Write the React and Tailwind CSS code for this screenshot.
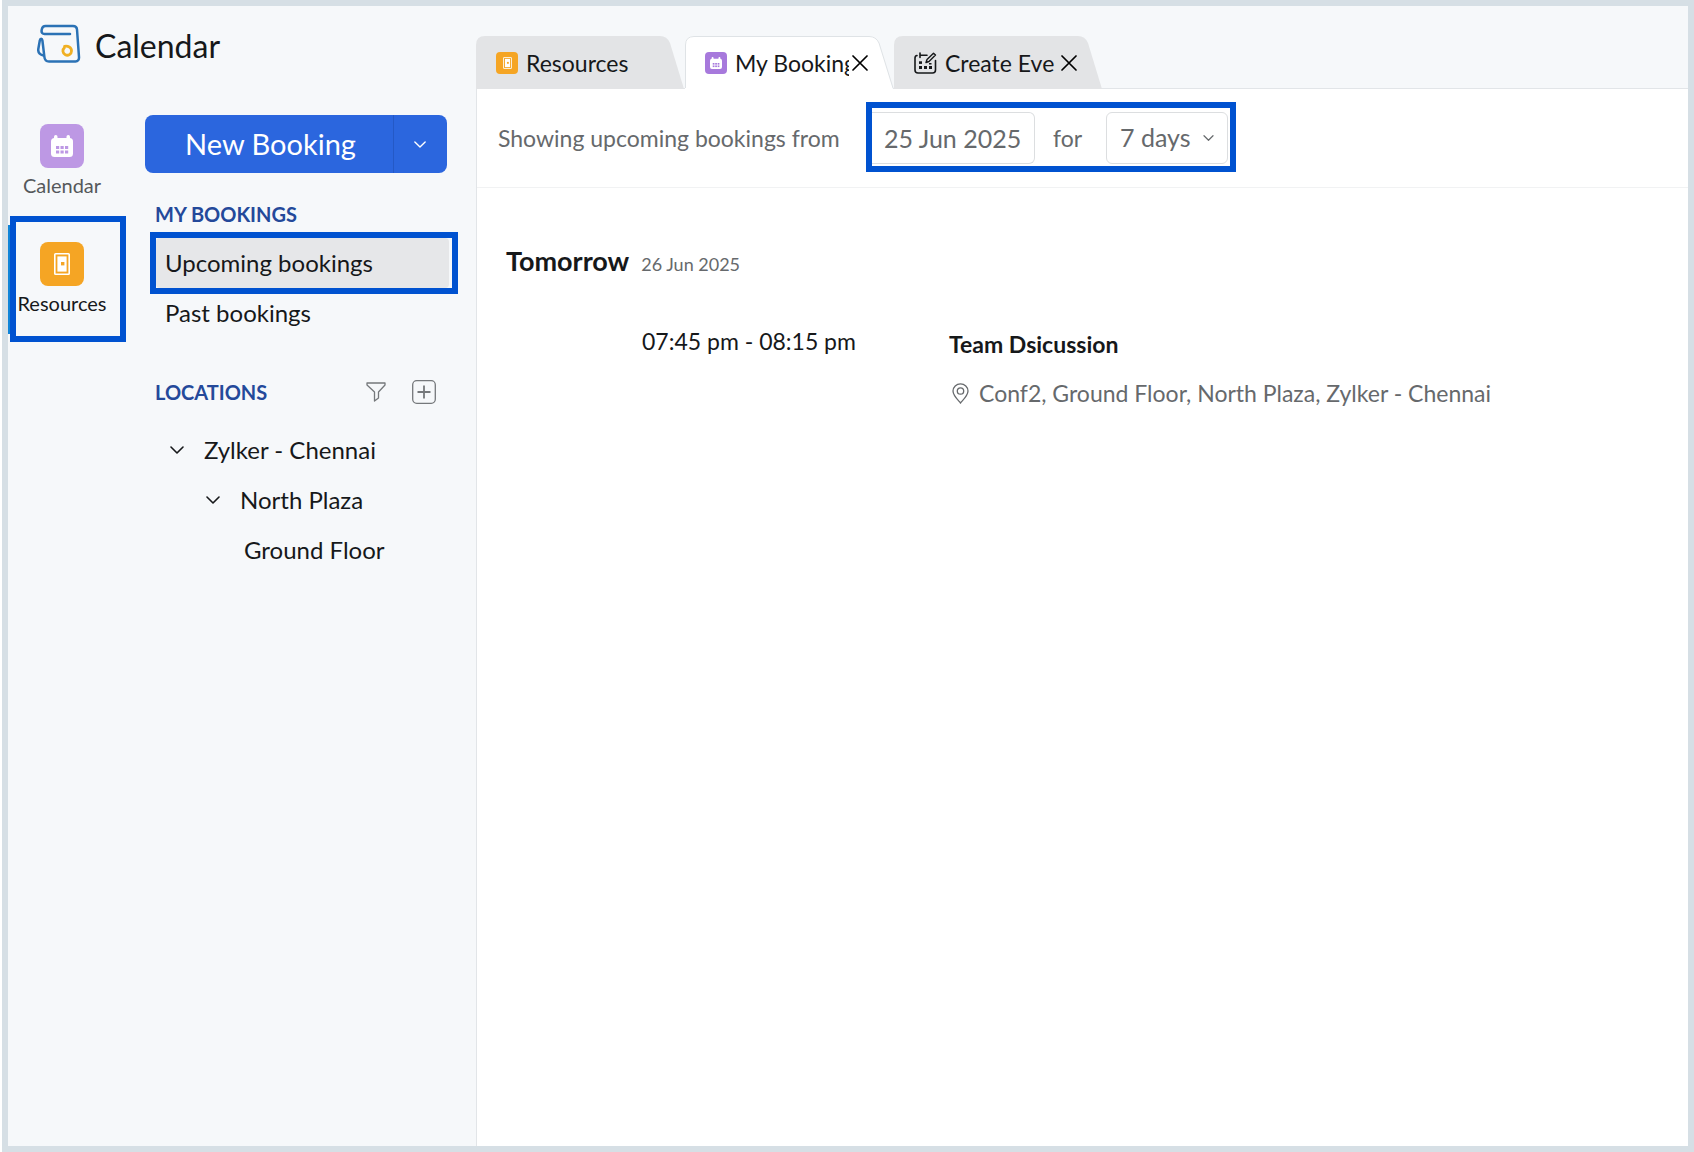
import { useState } from "react";

const FONT = "font-['Lato','Liberation_Sans',sans-serif]";

function LogoIcon() {
  return (
    <svg width="44" height="40" viewBox="0 0 44 40" fill="none" strokeLinecap="round" strokeLinejoin="round">
      <path
        d="M33 10H7.500C5.500 10 4.300 8.500 4.600 6.500L4.900 5C5.300 3 6.500 2 8.500 2H36C38.500 2 39.800 3.300 40 5.500L42 33C42.200 35.800 40.800 37.500 38.500 37.500H12C9 37.500 7.700 36 7.400 33L5.400 16.500C5.100 14.300 3.200 14.300 2.800 16.500L1.300 25C.9 28 2 30.500 6.500 31.500"
        stroke="#2b72b5"
        strokeWidth="2.500"
      />
      <path d="M27.500 22.300C31 21.800 34.500 23 34.500 27A4.300 4.300 0 1 1 27.500 23.600" stroke="#f0b023" strokeWidth="2.800" />
    </svg>
  );
}

function CalendarGlyph({ className }) {
  return (
    <svg viewBox="0 0 22 22" className={className}>
      <rect x="0" y="3" width="22" height="19" rx="3.500" fill="#fff" />
      <rect x="3" y="0" width="3.500" height="6" rx="1.700" fill="#fff" />
      <rect x="15.500" y="0" width="3.500" height="6" rx="1.700" fill="#fff" />
      <g fill="currentColor">
        <rect x="5" y="11" width="3.200" height="3" />
        <rect x="9.500" y="11" width="3.200" height="3" />
        <rect x="14" y="11" width="3.200" height="3" />
        <rect x="5" y="15.500" width="3.200" height="3" />
        <rect x="9.500" y="15.500" width="3.200" height="3" />
        <rect x="14" y="15.500" width="3.200" height="3" />
      </g>
    </svg>
  );
}

function DoorGlyph({ className }) {
  return (
    <svg viewBox="0 0 16 22" className={className}>
      <rect x="0.800" y="0.800" width="14.400" height="20.400" rx="0.800" fill="none" stroke="#fff" strokeWidth="1.600" />
      <rect x="3.400" y="3.400" width="9.200" height="15.200" fill="#fff" />
      <rect x="7" y="9" width="3.400" height="3.400" fill="currentColor" />
    </svg>
  );
}

function EditCalendarIcon() {
  return (
    <svg width="23" height="22" viewBox="0 0 23 22" fill="none" stroke="#16181a" strokeWidth="1.600" strokeLinecap="round">
      <path d="M3 3.500C1.700 3.700 1 4.500 1 6V18C1 20 2 21 4 21H18.500C20.500 21 21.500 20 21.500 18V8.500" />
      <path d="M6 1V5.500M6 3.300H13" />
      <path d="M12 10.500L13 7.500L19.500 1.200L21.500 3L15 9.500L12 10.500Z" strokeWidth="1.400" strokeLinejoin="round" />
      <g fill="#16181a" stroke="none">
        <rect x="5" y="9.300" width="3" height="2.600" />
        <rect x="5" y="14" width="3" height="3" />
        <rect x="10" y="14" width="3" height="3" />
        <rect x="15" y="14" width="3" height="3" />
        <rect x="15" y="11" width="2.500" height="1.500" />
      </g>
    </svg>
  );
}

function Chevron({ className }) {
  return (
    <svg viewBox="0 0 14 8" className={className} fill="none" stroke="currentColor" strokeWidth="1.600" strokeLinecap="round" strokeLinejoin="round">
      <path d="M1 1L7 7L13 1" />
    </svg>
  );
}

function TabShape({ active }) {
  return (
    <svg
      width="209"
      height="53"
      viewBox="0 0 209 53"
      className="absolute top-0 left-0"
      fill={active ? "#ffffff" : "#e3e4e6"}
    >
      <path d="M0 53V9Q0 0 9 0H184Q191 0 194 7L208 53Z" />
      {active && (
        <path d="M0.500 52V9Q0.500 0.500 9 0.500H184Q191 0.500 194 7L208 52" fill="none" stroke="#dfe3e6" />
      )}
    </svg>
  );
}

const tabs = [
  { id: "resources", label: "Resources", closable: false },
  { id: "bookings", label: "My Bookings", closable: true },
  { id: "create", label: "Create Eve", closable: true },
];

function TabIcon({ id }) {
  if (id === "resources") {
    return (
      <span className="flex size-[22px] items-center justify-center rounded bg-[#f5a524] text-[#f5a524]">
        <DoorGlyph className="h-3 w-[9px]" />
      </span>
    );
  }
  if (id === "bookings") {
    return (
      <span className="flex size-[22px] items-center justify-center rounded bg-[#a779dc] text-[#a779dc]">
        <CalendarGlyph className="size-3" />
      </span>
    );
  }
  return <EditCalendarIcon />;
}

function App() {
  const [activeTab, setActiveTab] = useState("bookings");
  const [date, setDate] = useState("25 Jun 2025");
  const [days, setDays] = useState("7 days");

  return (
    <div className={`min-h-screen flex bg-white pl-0.5 text-[#16181a] ${FONT}`}>
      <div className="flex-1 flex flex-col border-6 border-[#d6dfe5] bg-[#f6f8fa]">
        <header className="flex h-[82px] items-end">
          <div className="flex w-[468px] shrink-0 items-start gap-3.5 self-start pt-[18px] pl-[29px]">
            <LogoIcon />
            <h1 className="pt-0.5 text-[32px] leading-10">Calendar</h1>
          </div>

          <nav className="flex h-[52px] gap-px" aria-label="Open tabs">
            {tabs.map((tab) => (
              <div key={tab.id} className="relative flex w-[208px] items-center gap-[3px]">
                <TabShape active={tab.id === activeTab} />
                <button
                  type="button"
                  onClick={() => setActiveTab(tab.id)}
                  className="relative flex h-full w-[164px] items-center gap-2 overflow-hidden pt-0.5 pl-5 text-[23px] whitespace-nowrap"
                >
                  <span className="shrink-0">
                    <TabIcon id={tab.id} />
                  </span>
                  <span>{tab.label}</span>
                </button>
                {tab.closable && (
                  <button type="button" aria-label={`Close ${tab.label}`} className="relative flex pt-0.5">
                    <svg width="16" height="16" viewBox="0 0 16 16" stroke="#000" strokeWidth="1.700" strokeLinecap="round">
                      <path d="M1 1L15 15M15 1L1 15" />
                    </svg>
                  </button>
                )}
              </div>
            ))}
          </nav>
        </header>

        <div className="flex flex-1">
          <nav className="flex w-[119px] shrink-0 flex-col pt-9 text-xl leading-6" aria-label="Apps">
            <a href="#calendar" className="flex w-[108px] flex-col items-center gap-[5px] text-[#55585b]">
              <span className="flex size-11 items-center justify-center rounded-lg bg-[#bd98e4] text-[#bd98e4]">
                <CalendarGlyph className="size-[22px]" />
              </span>
              Calendar
            </a>
            <div className="mt-[19px] flex items-center">
              <span className="h-[109px] w-0.5 bg-[#0f84d8]" />
              <a
                href="#resources"
                className="flex h-[126px] w-[116px] flex-col border-6 border-[#0052d0] pt-5"
              >
                <span className="flex w-[92px] flex-col items-center gap-[5px]">
                  <span className="flex size-11 items-center justify-center rounded-lg bg-[#f5a524] text-[#f5a524]">
                    <DoorGlyph className="h-[22px] w-4" />
                  </span>
                  Resources
                </span>
              </a>
            </div>
          </nav>

          <aside className="flex w-[349px] shrink-0 flex-col pt-[27px] pl-[18px]">
            <div className="flex h-[58px] w-[302px] overflow-hidden rounded-lg bg-[#2b66de] text-white">
              <button type="button" className="flex-1 pr-px pl-1 text-[29px]">
                New Booking
              </button>
              <button
                type="button"
                aria-label="More booking options"
                className="flex w-[54px] items-center justify-center border-l border-[#2459c6] pr-0.5"
              >
                <Chevron className="h-[7px] w-3" />
              </button>
            </div>

            <h2 className="mt-[29px] pl-2.5 text-xl leading-6 font-bold text-[#24499a]">MY BOOKINGS</h2>
            <div className="mt-1.5 ml-[5px] w-[308px] border-6 border-[#0052d0] text-2xl">
              <a href="#upcoming" className="mr-[3px] flex h-[50px] items-center rounded bg-[#e6e7e9] pl-[9px]">
                Upcoming bookings
              </a>
            </div>
            <a href="#past" className="flex h-[38px] items-center pl-5 text-2xl">
              Past bookings
            </a>

            <div className="mt-12 flex h-6 items-center pl-2.5">
              <h2 className="w-[211px] text-xl leading-6 font-bold text-[#24499a]">LOCATIONS</h2>
              <button type="button" aria-label="Filter locations">
                <svg width="20" height="20" viewBox="0 0 20 20" fill="none" stroke="#75787b" strokeWidth="1.300" strokeLinejoin="round">
                  <path d="M1 1H19V3L12.500 10V16L8.500 19V10L1 3Z" />
                </svg>
              </button>
              <button type="button" aria-label="Add location" className="ml-[26px]">
                <svg width="24" height="24" viewBox="0 0 24 24" fill="none" stroke="#75787b" strokeWidth="1.300">
                  <rect x="0.700" y="0.700" width="22.600" height="22.600" rx="4" />
                  <path d="M5.500 12H18.500M12 5.500V18.500" strokeWidth="1.800" />
                </svg>
              </button>
            </div>

            <ul className="mt-[21px] text-2xl">
              <li className="flex h-[50px] items-center gap-5 pl-[25px]">
                <Chevron className="h-2 w-3.5" />
                Zylker - Chennai
              </li>
              <li className="flex h-[50px] items-center gap-5 pl-[61px]">
                <Chevron className="h-2 w-3.5" />
                North Plaza
              </li>
              <li className="flex h-[50px] items-center pl-[99px]">Ground Floor</li>
            </ul>
          </aside>

          <main className="flex-1 border-t border-l border-[#e2e5e8] bg-white">
            <div className="flex h-[99px] items-center border-b border-[#f1f2f3] pb-0.5 pl-[21px] text-[23px] text-[#66696c]">
              <label htmlFor="from-date" className="w-[368px] pt-0.5 whitespace-nowrap">
                Showing upcoming bookings from
              </label>
              <div className="flex h-[70px] w-[370px] items-center border-6 border-[#0052d0] pt-0.5">
                <input
                  id="from-date"
                  type="text"
                  value={date}
                  onChange={(e) => setDate(e.target.value)}
                  className="h-[52px] w-[163px] rounded-r-md border border-l-0 border-[#dcdee0] pl-3 text-[25px]"
                />
                <label htmlFor="days" className="flex-1 pl-[18px]">
                  for
                </label>
                <div className="relative mr-0.5">
                  <select
                    id="days"
                    value={days}
                    onChange={(e) => setDays(e.target.value)}
                    className="h-[52px] w-[122px] appearance-none rounded-md border border-[#dcdee0] bg-white pl-[13px] text-[25px]"
                  >
                    <option>7 days</option>
                    <option>14 days</option>
                    <option>30 days</option>
                  </select>
                  <Chevron className="pointer-events-none absolute top-[23px] right-3.5 h-1.5 w-[11px]" />
                </div>
              </div>
            </div>

            <section className="pt-[53px] pl-[29px]">
              <div className="flex items-baseline gap-3">
                <h2 className="text-[27px] leading-10 font-bold">Tomorrow</h2>
                <span className="text-lg text-[#66696c]">26 Jun 2025</span>
              </div>
              <div className="mt-11 flex pl-[136px] text-[23px] leading-8">
                <p className="w-[307px]">07:45 pm - 08:15 pm</p>
                <div className="pt-[3px]">
                  <h3 className="font-bold">Team Dsicussion</h3>
                  <p className="mt-[17px] flex items-center gap-2.5 pl-[3px] text-[#66696c]">
                    <svg width="17" height="21" viewBox="0 0 17 21" fill="none" stroke="#66696c" strokeWidth="1.300">
                      <path d="M8.500 20C6 17 1 12.500 1 8A7.500 7.200 0 0 1 16 8C16 12.500 11 17 8.500 20Z" />
                      <circle cx="8.500" cy="8" r="3.200" />
                    </svg>
                    Conf2, Ground Floor, North Plaza, Zylker - Chennai
                  </p>
                </div>
              </div>
            </section>
          </main>
        </div>
      </div>
    </div>
  );
}

export default App;
